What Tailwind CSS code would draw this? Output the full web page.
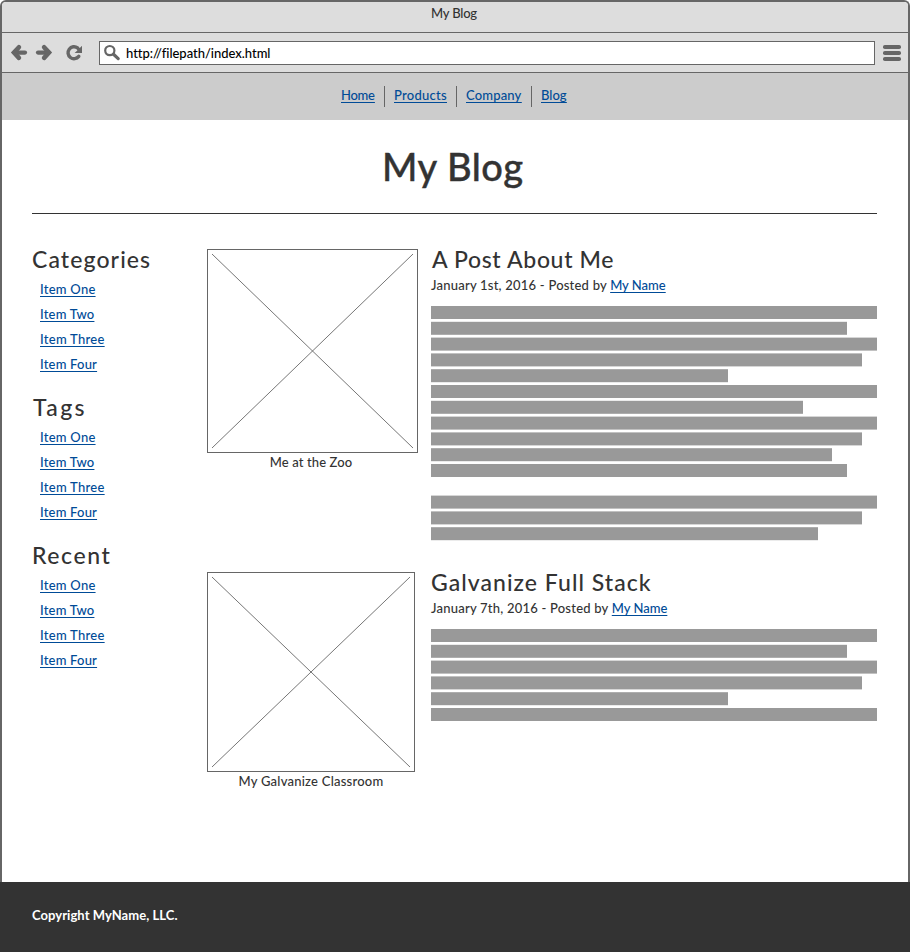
<!DOCTYPE html>
<html lang="en">
<head>
<meta charset="utf-8">
<title>My Blog</title>
<script src="https://cdn.jsdelivr.net/npm/@tailwindcss/browser@4"></script>
</head>
<body class="w-[910px] h-[952px] overflow-hidden bg-white font-[Lato,'Noto_Sans',sans-serif] font-medium text-[13px] leading-4 text-[#333]">
<div class="flex flex-col h-[882px] rounded-t-[6px] border-2 border-b-0 border-[#666] overflow-hidden">
  <div class="h-[31px] shrink-0 bg-[#ddd] border-b border-[#666] pt-[3px] text-center tracking-[-0.2px]"><span class="mr-0.5">My Blog</span></div>
  <div class="h-10 shrink-0 bg-[#ddd] border-b border-[#666] flex items-start pl-2 pr-1.5 pt-2">
    <svg class="w-[18px] h-6" viewBox="10 41 18 24" fill="none" stroke="#666" stroke-width="4.6" stroke-linecap="round"><path d="M15 52.6 H25" stroke-width="4.2"/><path d="M18.9 47.3 L14 52.6 L18.9 57.9"/></svg>
    <svg class="w-[18px] h-6 ml-[7px]" viewBox="35 41 18 24" fill="none" stroke="#666" stroke-width="4.6" stroke-linecap="round"><path d="M48 52.6 H38" stroke-width="4.2"/><path d="M44.1 47.3 L49 52.6 L44.1 57.9"/></svg>
    <svg class="w-5 h-6 ml-3" viewBox="65 41 20 24"><path d="M77.6 47.9 A6 6 0 1 0 78.8 56.4" fill="none" stroke="#666" stroke-width="3.4" stroke-linecap="round"/><path d="M82 45.8 V53 H74.6 L77.4 50.4 L76.6 49 L78.6 47.6 L79.8 48 Z" fill="#666"/></svg>
    <div class="flex-1 flex ml-3.5 h-6 bg-white border border-[#666] pt-[3px] text-black">
      <svg class="w-5 h-5 ml-[3px] -mt-0.5" viewBox="103 43 20 20" fill="none" stroke="#666"><circle cx="109.8" cy="50.6" r="4.6" stroke-width="2.2"/><path d="M113.5 54.3 L118.2 58.6" stroke-width="3.2" stroke-linecap="round"/></svg>
      <span class="ml-[3px] tracking-[-0.03px]">http://filepath/index.html</span>
    </div>
    <svg class="w-[19px] h-6 ml-2" viewBox="883 41 19 24" fill="#666"><rect x="883" y="45" width="18" height="4" rx="1.8"/><rect x="883" y="51" width="18" height="4" rx="1.8"/><rect x="883" y="57" width="18" height="4" rx="1.8"/></svg>
  </div>
  <nav class="h-[47px] shrink-0 bg-[#ccc] flex pl-[339px] pt-[13px] text-[#004b97] leading-[19px] underline decoration-1 underline-offset-2 [text-decoration-skip-ink:none]">
    <a class="w-[43px] tracking-[-0.27px]">Home</a>
    <a class="w-[72px] h-[21px] border-l border-[#666] pl-[9px] tracking-[0.27px]">Products</a>
    <a class="w-[75px] h-[21px] border-l border-[#666] pl-[9px] tracking-[0.17px]">Company</a>
    <a class="h-[21px] border-l border-[#666] pl-[9px]">Blog</a>
  </nav>
  <main class="px-[30px]">
    <header class="w-[845px] h-[94px] border-b border-[#333] pl-[350px] pt-[26px] text-[38px] leading-[40px] tracking-[0.5px] [-webkit-text-stroke:0.4px]"><h1>My Blog</h1></header>
    <div class="flex pt-[35px]">
      <aside class="w-[175px] shrink-0">
        <section class="h-[148px] flow-root">
          <h2 class="text-[23px] leading-7 h-7 -mt-1 tracking-[1.1px]">Categories</h2>
          <ul class="pl-2 pt-1 leading-[25px] text-[#004b97] underline decoration-1 underline-offset-2 [text-decoration-skip-ink:none]"><li class="tracking-[0.25px]">Item One</li><li class="tracking-[0.2px]">Item Two</li><li class="tracking-[0.28px]">Item Three</li><li class="tracking-[0.2px]">Item Four</li></ul>
        </section>
        <section class="h-[148px] flow-root">
          <h2 class="text-[23px] leading-7 h-7 -mt-1 pl-px tracking-[2.3px]">Tags</h2>
          <ul class="pl-2 pt-1 leading-[25px] text-[#004b97] underline decoration-1 underline-offset-2 [text-decoration-skip-ink:none]"><li class="tracking-[0.25px]">Item One</li><li class="tracking-[0.2px]">Item Two</li><li class="tracking-[0.28px]">Item Three</li><li class="tracking-[0.2px]">Item Four</li></ul>
        </section>
        <section class="h-[148px] flow-root">
          <h2 class="text-[23px] leading-7 h-7 -mt-1 tracking-[1.6px]">Recent</h2>
          <ul class="pl-2 pt-1 leading-[25px] text-[#004b97] underline decoration-1 underline-offset-2 [text-decoration-skip-ink:none]"><li class="tracking-[0.25px]">Item One</li><li class="tracking-[0.2px]">Item Two</li><li class="tracking-[0.28px]">Item Three</li><li class="tracking-[0.2px]">Item Four</li></ul>
        </section>
      </aside>
      <div class="w-[670px] shrink-0">
        <article class="flex h-[323px]">
          <figure class="w-[224px] shrink-0">
            <svg class="block w-[211px] h-[204px]" viewBox="0 0 211 204" fill="none" stroke="#666"><rect x=".5" y=".5" width="210" height="203"/><path d="M5 5 L206 199 M206 5 L5 199" stroke-width=".9"/></svg>
            <figcaption class="w-[208px] text-center pt-px tracking-[0.13px]">Me at the Zoo</figcaption>
          </figure>
          <div>
            <h2 class="text-[23px] leading-7 h-7 -mt-1 pl-px tracking-[0.65px]">A Post About Me</h2>
            <p class="pt-1 h-[33px] tracking-[0.22px]">January 1st, 2016 - Posted by <a class="text-[#004b97] tracking-[0px] underline decoration-1 underline-offset-2 [text-decoration-skip-ink:none]">My Name</a></p>
            <svg class="block w-[446px] h-[236px]" viewBox="0 0 446 236" fill="#999"><rect width="446" height="13"/><rect y="15.8" width="416" height="13"/><rect y="31.6" width="446" height="13"/><rect y="47.4" width="431" height="13"/><rect y="63.2" width="297" height="13"/><rect y="79" width="446" height="13"/><rect y="94.8" width="372" height="13"/><rect y="110.6" width="446" height="13"/><rect y="126.4" width="431" height="13"/><rect y="142.2" width="401" height="13"/><rect y="158" width="416" height="13"/><rect y="189.6" width="446" height="13"/><rect y="205.4" width="431" height="13"/><rect y="221.2" width="387" height="13"/></svg>
          </div>
        </article>
        <article class="flex">
          <figure class="w-[224px] shrink-0">
            <svg class="block w-[208px] h-[200px]" viewBox="0 0 208 200" fill="none" stroke="#666"><rect x=".5" y=".5" width="207" height="199"/><path d="M5 5 L203 195 M203 5 L5 195" stroke-width=".9"/></svg>
            <figcaption class="w-[208px] text-center pt-px tracking-[0.23px]">My Galvanize Classroom</figcaption>
          </figure>
          <div>
            <h2 class="text-[23px] leading-7 h-7 -mt-1 tracking-[1.03px]">Galvanize Full Stack</h2>
            <p class="pt-1 h-[33px] tracking-[0.22px]">January 7th, 2016 - Posted by <a class="text-[#004b97] tracking-[0px] underline decoration-1 underline-offset-2 [text-decoration-skip-ink:none]">My Name</a></p>
            <svg class="block w-[446px] h-[93px]" viewBox="0 0 446 93" fill="#999"><rect width="446" height="13"/><rect y="15.8" width="416" height="13"/><rect y="31.6" width="446" height="13"/><rect y="47.4" width="431" height="13"/><rect y="63.2" width="297" height="13"/><rect y="79" width="446" height="13"/></svg>
          </div>
        </article>
      </div>
    </div>
  </main>
</div>
<footer class="h-[70px] bg-[#333] text-white font-bold pl-8 pt-[25px] tracking-[0.05px]">Copyright MyName, LLC.</footer>
</body>
</html>
